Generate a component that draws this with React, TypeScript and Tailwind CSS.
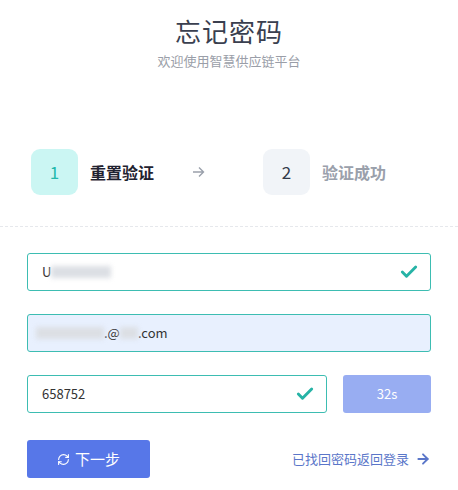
import { Check, RefreshCw, ArrowRight } from 'lucide-react';

const font = { fontFamily: '"Noto Sans CJK SC", "Noto Sans", sans-serif' };

function Blur({ w }: { w: number }) {
  return <span className="inline-block h-[12px] bg-[#dcdfe4] blur-[2.5px] align-middle" style={{ width: w }} />;
}

export default function App() {
  return (
    <div className="w-[458px] h-[490px] bg-white overflow-hidden" style={font}>
      <div className="flex flex-col items-center pt-[12px]">
        <h1 className="text-[26px] leading-[38px] text-[#3a3f4f] tracking-[1px]">忘记密码</h1>
        <p className="text-[13px] leading-[20px] text-[#9a9ea8] mt-[1px]">欢迎使用智慧供应链平台</p>
      </div>

      <div className="flex items-center pl-[31px] mt-[78px] h-[46px]">
        <div className="w-[47px] h-[46px] rounded-[9px] bg-[#cbf6f3] flex items-center justify-center text-[17px] text-[#22b8ab]">
          1
        </div>
        <span className="ml-[12px] text-[16px] font-bold text-[#1f2230]">重置验证</span>
        <span className="ml-[38px] text-[#9aa0ab]">
          <svg width="13" height="14" viewBox="0 0 13 14" fill="none" stroke="currentColor" strokeWidth="1.4">
            <path d="M1 7h10.5M7 2.5 11.5 7 7 11.5" />
          </svg>
        </span>
        <div className="ml-[58px] w-[47px] h-[46px] rounded-[9px] bg-[#f1f4f8] flex items-center justify-center text-[17px] text-[#333a4a]">
          2
        </div>
        <span className="ml-[12px] text-[16px] font-bold text-[#9aa0ab]">验证成功</span>
      </div>

      <div className="mt-[31px] border-t border-dashed border-[#e6e8ec]" />

      <div className="px-[27px] pt-[26px] flex flex-col gap-[23px]">
        <div className="h-[38px] border border-[#3dbdb2] rounded-[3px] flex items-center pl-[14px] pr-[11px] text-[13px] text-[#333]">
          <span>U</span>
          <Blur w={60} />
          <Check className="ml-auto text-[#26b3a6]" size={20} strokeWidth={3.5} />
        </div>

        <div className="h-[38px] border border-[#3dbdb2] bg-[#e8f0fe] rounded-[3px] flex items-center pl-[8px] text-[13px] text-[#333]">
          <Blur w={68} />
          <span>.@</span>
          <Blur w={18} />
          <span>.com</span>
        </div>

        <div className="flex gap-[16px]">
          <div className="flex-1 h-[38px] border border-[#3dbdb2] rounded-[3px] flex items-center pl-[14px] pr-[11px] text-[13px] text-[#333]">
            <span>658752</span>
            <Check className="ml-auto text-[#26b3a6]" size={20} strokeWidth={3.5} />
          </div>
          <button className="w-[88px] h-[38px] rounded-[3px] bg-[#98adf2] text-white text-[13px]">32s</button>
        </div>

        <div className="flex items-center justify-between mt-[4px]">
          <button className="w-[123px] h-[38px] rounded-[3px] bg-[#5777e8] text-white text-[15px] flex items-center justify-center gap-[5px]">
            <RefreshCw size={13} strokeWidth={2} />
            <span>下一步</span>
          </button>
          <a className="flex items-center gap-[6px] text-[13px] text-[#5a76c9]">
            已找回密码返回登录
            <ArrowRight size={16} strokeWidth={2.75} />
          </a>
        </div>
      </div>
    </div>
  );
}
